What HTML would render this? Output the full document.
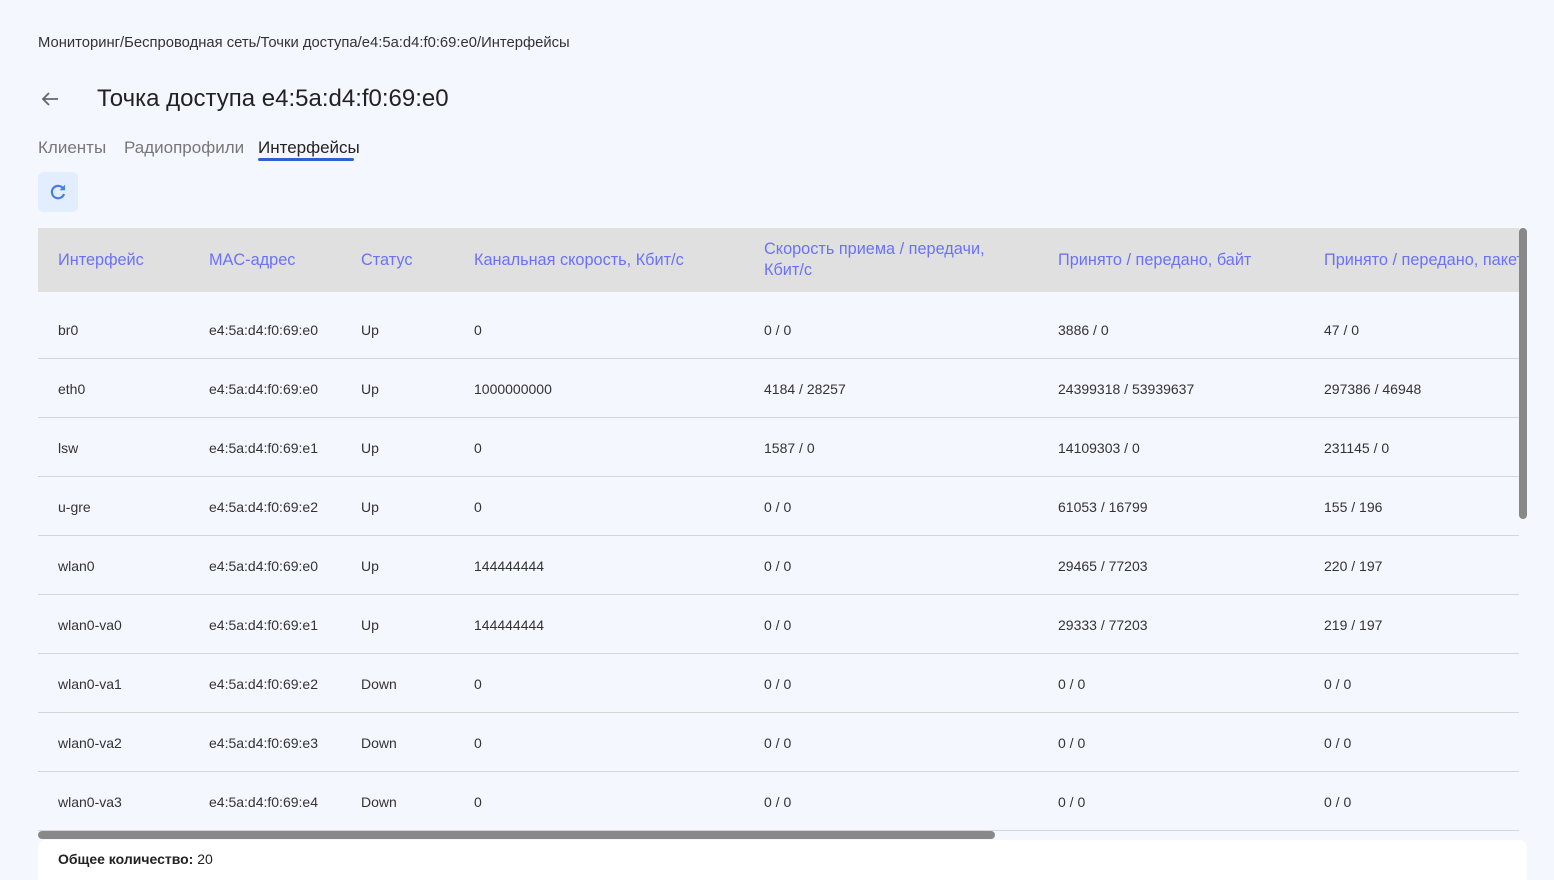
<!DOCTYPE html>
<html><head><meta charset="utf-8"><style>
*{margin:0;padding:0;box-sizing:border-box}
body{width:1554px;height:876px;overflow:hidden;background:#f4f7fe;font-family:"Liberation Sans","DejaVu Sans",sans-serif;color:#333;position:relative}
.a{position:absolute;white-space:nowrap}
.bc{left:38px;top:35px;font-size:14.8px;color:#333}
.title{left:97px;top:85px;font-size:24px;color:#222}
.tab{top:138px;font-size:17px;color:#777}
.hd{position:absolute;left:38px;top:228px;width:1481px;height:64px;background:#e0e0e0;overflow:hidden}
.hd span{position:absolute;font-size:16.3px;color:#6b72f5;line-height:21px;white-space:nowrap}
.c{position:absolute;font-size:14px;color:#333;white-space:nowrap}
.ln{position:absolute;left:38px;width:1481px;height:1px;background:#d6d6d6}
</style></head><body>
<div class="a bc">Мониторинг/Беспроводная сеть/Точки доступа/e4:5a:d4:f0:69:e0/Интерфейсы</div>
<svg class="a" style="left:40px;top:90px" width="20" height="18" viewBox="0 0 20 18"><path d="M18 9H3M9 3L3 9l6 6" fill="none" stroke="#666" stroke-width="1.8"/></svg>
<div class="a title">Точка доступа e4:5a:d4:f0:69:e0</div>
<div class="a tab" style="left:38px">Клиенты</div>
<div class="a tab" style="left:124px">Радиопрофили</div>
<div class="a tab" style="left:258px;color:#222">Интерфейсы</div>
<div class="a" style="left:258px;top:158px;width:96px;height:3px;background:#2f5fd0;border-radius:2px"></div>
<div class="a" style="left:38px;top:172px;width:40px;height:40px;background:#e2edfd;border-radius:6px"></div>
<svg class="a" style="left:48px;top:182px" width="20" height="20" viewBox="0 0 20 20"><path d="M15.5 7A6.2 6.2 0 1 0 16 12" fill="none" stroke="#4a7de0" stroke-width="2.2"/><path d="M11.5 8.2L17 8.2 17 2.8Z" fill="#4a7de0"/></svg>
<div class="hd">
<span style="left:20px;top:22px">Интерфейс</span>
<span style="left:171px;top:22px">MAC-адрес</span>
<span style="left:323px;top:22px">Статус</span>
<span style="left:436px;top:22px">Канальная скорость, Кбит/с</span>
<span style="left:726px;top:11px">Скорость приема / передачи,<br>Кбит/с</span>
<span style="left:1020px;top:22px">Принято / передано, байт</span>
<span style="left:1286px;top:22px">Принято / передано, пакеты</span>
</div>
<div id="rows"></div>
<div class="a" style="left:1519px;top:228px;width:8px;height:291px;background:#888;border-radius:4px"></div>
<div class="a" style="left:38px;top:831px;width:957px;height:8px;background:#888;border-radius:4px"></div>
<div class="a" style="left:38px;top:840px;width:1489px;height:40px;background:#fff;border-radius:8px 8px 0 0"></div>
<div class="a" style="left:58px;top:851px;font-size:14px;color:#222"><b>Общее количество:</b> 20</div>
<script>
var d=[["br0","e4:5a:d4:f0:69:e0","Up","0","0 / 0","3886 / 0","47 / 0"],
["eth0","e4:5a:d4:f0:69:e0","Up","1000000000","4184 / 28257","24399318 / 53939637","297386 / 46948"],
["lsw","e4:5a:d4:f0:69:e1","Up","0","1587 / 0","14109303 / 0","231145 / 0"],
["u-gre","e4:5a:d4:f0:69:e2","Up","0","0 / 0","61053 / 16799","155 / 196"],
["wlan0","e4:5a:d4:f0:69:e0","Up","144444444","0 / 0","29465 / 77203","220 / 197"],
["wlan0-va0","e4:5a:d4:f0:69:e1","Up","144444444","0 / 0","29333 / 77203","219 / 197"],
["wlan0-va1","e4:5a:d4:f0:69:e2","Down","0","0 / 0","0 / 0","0 / 0"],
["wlan0-va2","e4:5a:d4:f0:69:e3","Down","0","0 / 0","0 / 0","0 / 0"],
["wlan0-va3","e4:5a:d4:f0:69:e4","Down","0","0 / 0","0 / 0","0 / 0"]];
var xs=[58,209,361,474,764,1058,1324],h="";
d.forEach(function(r,i){var y=322+i*59;r.forEach(function(t,j){h+='<div class="c" style="left:'+xs[j]+'px;top:'+y+'px">'+t+'</div>'});h+='<div class="ln" style="top:'+(358+i*59)+'px"></div>'});
document.getElementById("rows").innerHTML=h;
</script>
</body></html>
